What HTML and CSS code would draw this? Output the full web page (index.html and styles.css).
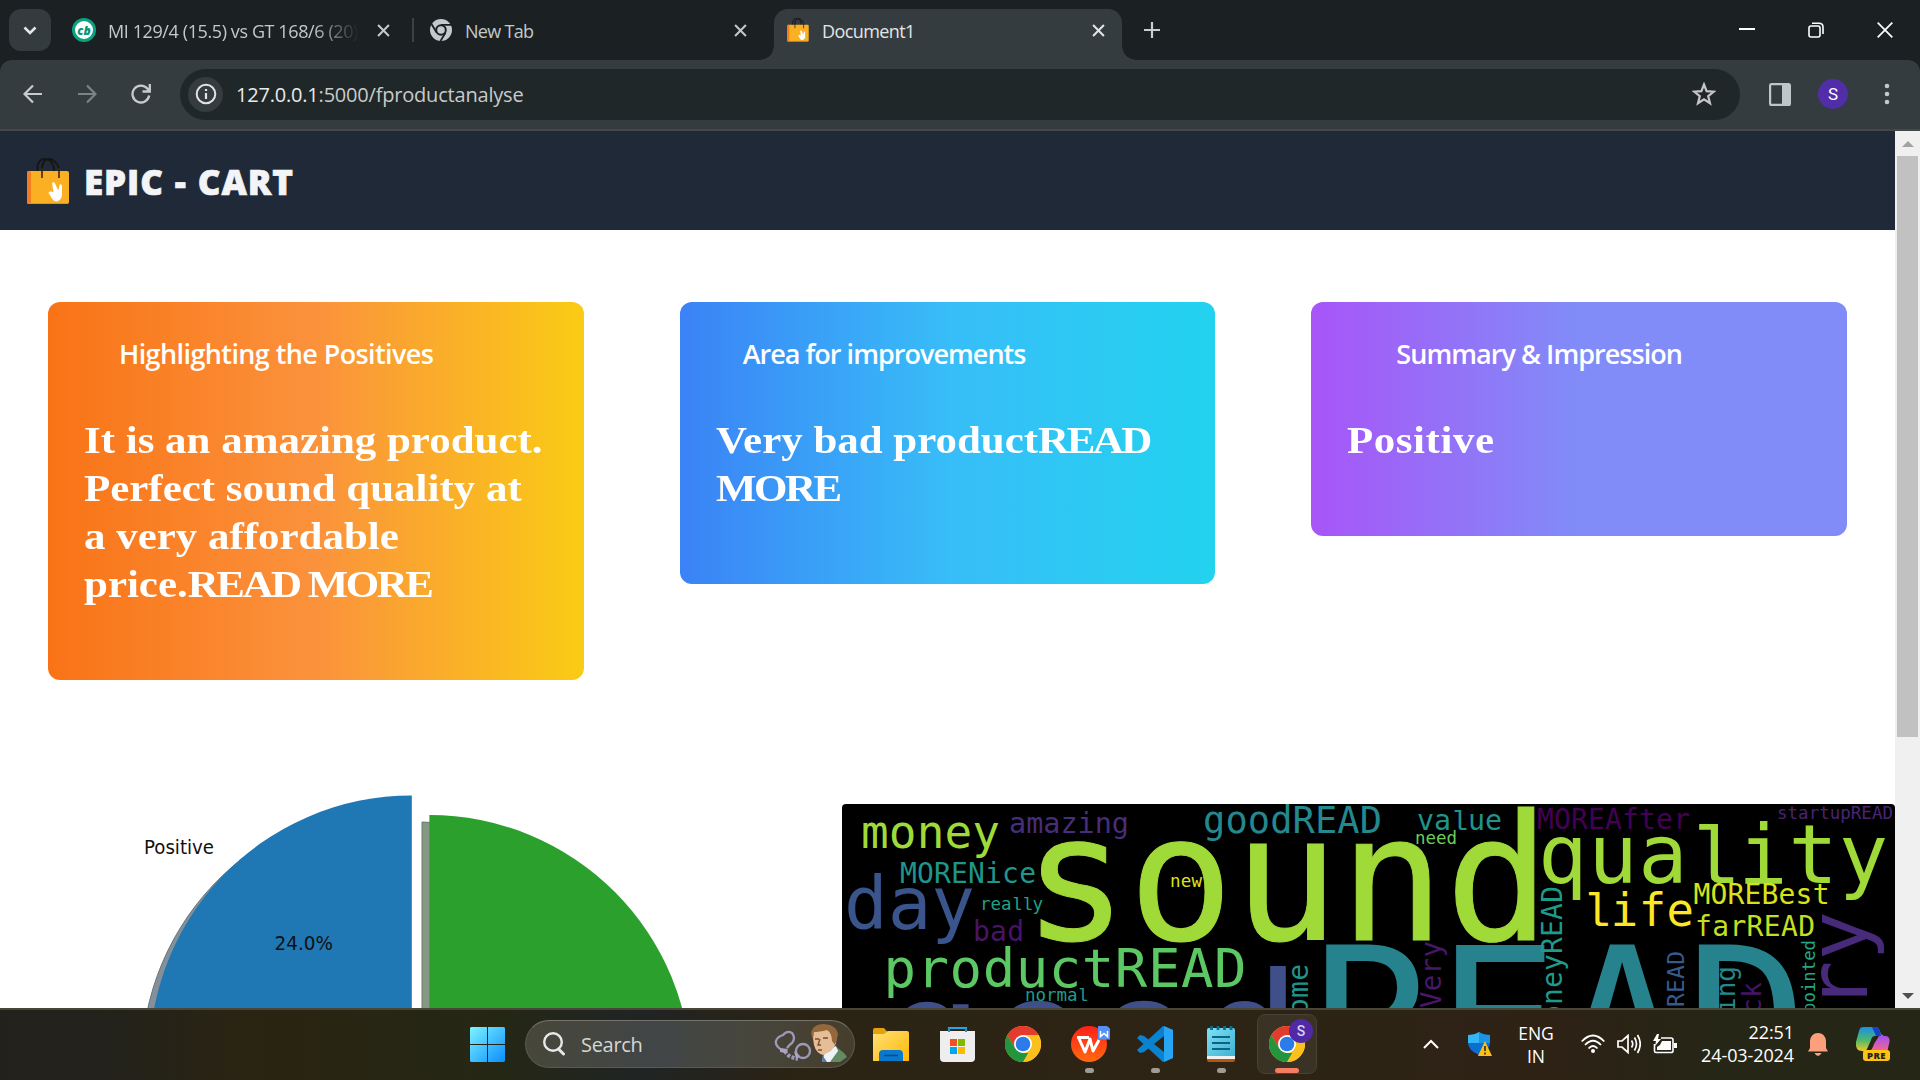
FILE: index.html
```html
<!DOCTYPE html>
<html lang="en">
<head>
<meta charset="utf-8">
<title>Document1</title>
<link rel="stylesheet" href="styles.css">
</head>
<body>
<svg width="0" height="0" class="defs">
  <defs>
    <linearGradient id="win" x1="0" y1="0" x2="1" y2="1"><stop offset="0" stop-color="#7df4ff"/><stop offset="1" stop-color="#0a8dff"/></linearGradient>
    <linearGradient id="fold" x1="0" y1="0" x2="1" y2="1"><stop offset="0" stop-color="#ffe07a"/><stop offset="1" stop-color="#ffb900"/></linearGradient>
    <linearGradient id="wps" x1="0" y1="0" x2="0" y2="1"><stop offset="0" stop-color="#ff1f1a"/><stop offset="1" stop-color="#ff6a10"/></linearGradient>
    <linearGradient id="note" x1="0" y1="0" x2="1" y2="1"><stop offset="0" stop-color="#7fe0f5"/><stop offset="1" stop-color="#3fb2d2"/></linearGradient>
    <linearGradient id="copA" x1="0" y1="0" x2="0" y2="1"><stop offset="0" stop-color="#1a8fe8"/><stop offset=".55" stop-color="#4fb96a"/><stop offset="1" stop-color="#f5c828"/></linearGradient>
    <linearGradient id="copB" x1="0" y1="0" x2="0" y2="1"><stop offset="0" stop-color="#a650f0"/><stop offset="1" stop-color="#ff6a80"/></linearGradient>
    <symbol id="bag" viewBox="0 0 42 47">
      <path d="M10.500 21V10Q11 1 18 1T27 10V15M15 21V10Q16 1 22 1T32 10V21" fill="none" stroke="#151515" stroke-width="1.800"/>
      <rect x="0" y="13" width="42" height="33" rx="2" fill="#fbb024"/>
      <rect x="0" y="13" width="4" height="33" rx="2" fill="#f47c20"/>
      <path d="M1 45.500H41" stroke="#e8901c"/>
      <path d="M15 10V20M32 10V20" stroke="#3a2a10" stroke-width="1.600"/>
      <path d="M25 25q2-1.500 3 .5l3 6.500q1-.5 1.500-5 1.500-1.500 2.500.5v10q-1 5-5.500 6-3-.5-4.500-3l-3.500-5.500q0-2 3-1.500l2 1z" fill="#fff"/>
    </symbol>
    <symbol id="chrome" viewBox="0 0 36 36">
      <circle cx="18" cy="18" r="18" fill="#fcc01c"/>
      <path d="M18 0A18 18 0 0 1 33.600 9H18L10.200 22.500 2.400 9A18 18 0 0 1 18 0Z" fill="#e33b2e"/>
      <path d="M2.400 9 10.200 22.500 18 27H25.800L18 36A18 18 0 0 1 2.400 9Z" fill="#24953f"/>
      <path d="M33.600 9A18 18 0 0 1 18 36L25.800 22.500 18 9Z" fill="#fcc01c"/>
      <circle cx="18" cy="18" r="9" fill="#fff"/><circle cx="18" cy="18" r="7.300" fill="#2b7be9"/>
    </symbol>
    <symbol id="x" viewBox="0 0 12 12"><path d="M1 1 11 11M11 1 1 11" fill="none" stroke="currentColor" stroke-width="1.900"/></symbol>
  </defs>
</svg>

<div class="screen">
  <header class="tabstrip">
    <button class="tabsearch"><svg width="14" height="9" viewBox="0 0 14 9"><path d="M1.500 1.500 7 7 12.500 1.500" fill="none" stroke="#e3e7e7" stroke-width="2.600"/></svg></button>
    <div class="tab tab-cricket">
      <span class="cb">cb</span>
      <span class="label fade">MI 129/4 (15.5) vs GT 168/6 (20)</span>
      <svg class="close"><use href="#x"/></svg>
    </div>
    <i class="sep"></i>
    <div class="tab tab-new">
      <svg width="22" height="22" viewBox="0 0 22 22"><circle cx="11" cy="11" r="11" fill="#c3c9cc"/><circle cx="11" cy="11" r="4.800" fill="#c3c9cc" stroke="#1b2123" stroke-width="2"/><path d="M11 5.800H21M6.600 13.500 1.500 5M15.500 13.700 10.500 22" stroke="#1b2123" stroke-width="1.800"/></svg>
      <span class="label">New Tab</span>
      <svg class="close"><use href="#x"/></svg>
    </div>
    <div class="tab tab-active">
      <svg width="22" height="24"><use href="#bag"/></svg>
      <span class="label">Document1</span>
      <svg class="close"><use href="#x"/></svg>
    </div>
    <svg class="plus" width="16" height="16" viewBox="0 0 16 16"><path d="M8 0V16M0 8H16" stroke="#c8cdce" stroke-width="2.200"/></svg>
    <div class="winctl">
      <svg width="16" height="16" viewBox="0 0 16 16"><path d="M0 7H16" stroke="#fff" stroke-width="2"/></svg>
      <svg width="16" height="16" viewBox="0 0 16 16" fill="none" stroke="#fff" stroke-width="1.600"><rect x="1" y="4" width="11" height="11" rx="2"/><path d="M4 1.200H11Q15 1.200 15 5V12"/></svg>
      <svg width="16" height="16" viewBox="0 0 16 16"><path d="M.7.700 15.300 15.300M15.300.700.700 15.300" stroke="#fff" stroke-width="1.700"/></svg>
    </div>
  </header>

  <nav class="toolbar">
    <svg width="20" height="20" viewBox="0 0 20 20" fill="none" stroke="#c6cccd" stroke-width="2.200"><path d="M19 10H2M10 1.500 1.500 10 10 18.500"/></svg>
    <svg width="20" height="20" viewBox="0 0 20 20" fill="none" stroke="#7c8385" stroke-width="2.200"><path d="M1 10H18M10 1.500 18.500 10 10 18.500"/></svg>
    <svg width="20" height="20" viewBox="0 0 20 20" fill="none" stroke="#c6cccd" stroke-width="2.300"><path d="M18.200 11.500A8.400 8.400 0 1 1 16.500 4.800L18.500 7M18.800 0V7.500H11.500"/></svg>
    <div class="omnibox">
      <span class="info"><svg width="22" height="22" viewBox="0 0 22 22"><circle cx="11" cy="11" r="9.300" fill="none" stroke="#e3e3e3" stroke-width="2"/><path d="M11 10V16M11 6V8" stroke="#e3e3e3" stroke-width="2.200"/></svg></span>
      <span class="url"><b>127.0.0.1</b>:5000/fproductanalyse</span>
      <svg width="24" height="24" viewBox="0 0 24 24"><path d="M12 2.500 14.600 9.200 21.800 9.700 16.200 14.200 18 21.200 12 17.300 6 21.200 7.800 14.200 2.200 9.700 9.400 9.200Z" fill="none" stroke="#c6c6c6" stroke-width="2.200"/></svg>
    </div>
    <svg class="panel" width="22" height="23" viewBox="0 0 22 23"><rect x="1.100" y="1.100" width="19.800" height="20.800" rx="1.500" fill="none" stroke="#bec6c9" stroke-width="2.200"/><path d="M13 0H20V23H13Z" fill="#bec6c9"/></svg>
    <span class="avatar">S</span>
    <svg width="6" height="22" viewBox="0 0 6 22" fill="#c3cacc"><circle cx="3" cy="3" r="2.300"/><circle cx="3" cy="11" r="2.300"/><circle cx="3" cy="19" r="2.300"/></svg>
  </nav>

  <div class="viewport">
    <main class="page">
      <div class="brandbar">
        <svg width="42" height="47"><use href="#bag"/></svg>
        <h1>EPIC - CART</h1>
      </div>
      <section class="cards">
        <article class="card positives">
          <h2>Highlighting the Positives</h2>
          <p>It is an amazing product.<br>Perfect sound quality at<br>a very affordable<br>price.<span>READ MORE</span></p>
        </article>
        <article class="card improve">
          <h2>Area for improvements</h2>
          <p>Very bad product<span>READ<br>MORE</span></p>
        </article>
        <article class="card summary">
          <h2>Summary &amp; Impression</h2>
          <p>Positive</p>
        </article>
      </section>
      <section class="charts">
        <svg class="pie" width="842" height="218" viewBox="0 790 842 218">
          <path d="M403.800 1064V803A262 262 0 0 0 142 1080Z" fill="#84919a" stroke="#66757f"/>
          <path d="M422 1084V822A262 262 0 0 1 684 1084Z" fill="#869786" stroke="#6b7f6b"/>
          <path d="M411.800 1057V795.500A262 262 0 0 0 150 1073Z" fill="#1f77b4"/>
          <path d="M429.400 1077V815A262 262 0 0 1 691.400 1077Z" fill="#2ca02c"/>
          <g font-family="DejaVu Sans" font-size="19" fill="#111">
            <text x="144" y="853.500" textLength="70" lengthAdjust="spacingAndGlyphs">Positive</text>
            <text x="274.500" y="949.500" textLength="58.500" lengthAdjust="spacingAndGlyphs">24.0%</text>
          </g>
        </svg>
        <svg class="cloud" width="1053" height="204" viewBox="842 804 1053 204">
          <rect x="842" y="804" width="1053" height="204" fill="#000"/>
          <g class="words">
            <text x="861" y="847.500" font-size="46" textLength="139" fill="#a0da39">money</text>
            <text x="1009" y="833.300" font-size="28.500" textLength="120" fill="#472d7b">amazing</text>
            <text x="1203" y="832.700" font-size="37" textLength="179" fill="#23898e">goodREAD</text>
            <text x="1023" y="939.500" font-size="174" textLength="527" fill="#a0da39" stroke="#a0da39" stroke-width="1">sound</text>
            <text x="900" y="883" font-size="28" textLength="136" fill="#1f958b">MORENice</text>
            <text x="844" y="928.500" font-size="72.500" textLength="131" fill="#3a548c">day</text>
            <text x="980" y="909.800" font-size="17.500" textLength="63" fill="#1fa187">rea<tspan class="l">ll</tspan>y</text>
            <text x="973" y="940.600" font-size="28" textLength="51" fill="#481467">bad</text>
            <text x="1170" y="887" font-size="17.500" textLength="32" fill="#dde318">new</text>
            <text x="883.500" y="986.700" font-size="54" textLength="363" fill="#5cc863">productREAD</text>
            <text x="1025" y="1000.500" font-size="17.500" textLength="63" fill="#1e9c89">norma<tspan class="l">l</tspan></text>
            <text x="880" y="1099" font-size="174" textLength="422" fill="#3e4f8a">good</text>
            <text x="1312" y="1093" font-size="204" textLength="496" fill="#26838e">READ</text>
            <text x="1417" y="830" font-size="28.300" textLength="85" fill="#20938c">va<tspan class="l">l</tspan>ue</text>
            <text x="1415" y="843.800" font-size="17.500" textLength="42" fill="#6ccd5a">need</text>
            <text x="1537" y="829" font-size="28" textLength="153" fill="#440154">MOREAfter</text>
            <text x="1538" y="882.700" font-size="82" textLength="350" fill="#a0da39">qua<tspan class="l">l</tspan>ity</text>
            <text x="1777" y="818.700" font-size="17.500" textLength="116" fill="#482475">startupREAD</text>
            <text x="1583" y="926" font-size="45.500" textLength="111" fill="#fde725"><tspan class="l">l</tspan>ife</text>
            <text x="1693.500" y="904.300" font-size="28" textLength="136" fill="#d8e219">MOREBest</text>
            <text x="1695" y="935.700" font-size="28" textLength="120" fill="#c2df23">farREAD</text>
            <text transform="translate(1308 1015)rotate(-90)" font-size="28" textLength="51" fill="#20938c">ome</text>
            <text transform="translate(1562 1039)rotate(-90)" font-size="28" textLength="153" fill="#1f9a8a">moneyREAD</text>
            <text transform="translate(1441 1008)rotate(-90)" font-size="27.500" textLength="67" fill="#481769">Very</text>
            <text transform="translate(1684 1007)rotate(-90)" font-size="23" textLength="56" fill="#375a8c">READ</text>
            <text transform="translate(1734.800 1013)rotate(-90)" font-size="26" textLength="47" fill="#23898e">ing</text>
            <text transform="translate(1761 1014)rotate(-90)" font-size="26" textLength="32" fill="#481467">ck</text>
            <text transform="translate(1814.700 1013)rotate(-90)" font-size="17.300" textLength="73" fill="#22a884">pointed</text>
            <text transform="translate(1867.400 1010)rotate(-90)" font-size="82" textLength="99" fill="#472a7a">ry</text>
          </g>
        </svg>
      </section>
    </main>
    <aside class="scroll"><i class="up"></i><i class="thumb"></i><i class="down"></i></aside>
  </div>

  <footer class="taskbar">
    <div class="apps">
      <svg class="start" width="35" height="35" viewBox="0 0 35 35"><path d="M1 0H17V17H0V1ZM18 0H34L35 1V17H18ZM0 18H17V35H1L0 34ZM18 18H35V34L34 35H18Z" fill="url(#win)"/></svg>
      <div class="search">
        <svg width="24" height="24" viewBox="0 0 24 24" fill="none" stroke="#e8e8e8" stroke-width="2.400"><circle cx="11" cy="10" r="8.800"/><path d="M16.500 17 21.500 22" stroke-width="3" stroke-linecap="round"/></svg>
        <span>Search</span>
        <svg class="art" width="74" height="40" viewBox="0 0 74 40">
          <g fill="none" stroke="#9c9ab8" stroke-width="2.300"><path d="M8 26Q1 22 2 17 3 13 9 11 13 6 18 9 22 14 18 19 15 21 13 24"/><path d="M11 27Q13 31 17 33L24 35" stroke-dasharray="3 1.500" stroke-width="4"/><circle cx="29" cy="27" r="7"/></g>
          <path d="M6 24 14 25 12 29 6 28ZM20 27 26 32 22 35Z" fill="#a8a6c6"/>
          <path d="M48 38 49 29 60 21 70 29 73 33 66 38Z" fill="#648c62"/><path d="M48 38 51 28 62 22 64 27 56 38Z" fill="#eef3f8"/><path d="M49 32 53 38H48Z" fill="#4f7cc0"/>
          <path d="M38 8Q45 2 56 5 64 9 62 20L57 27 49 31Q42 29 40 21Z" fill="#e5bd96"/>
          <path d="M37 10Q38 0 50 0 63 1 64 11L61 21 58 17Q58 9 53 6 45 8 40 8L39 15Z" fill="#94683c"/>
          <path d="M41 15H45M49 14H54M46 15 44 21H47M44 26H48" stroke="#7b4a30" stroke-width="1.300" fill="none"/>
        </svg>
      </div>
      <div class="app"><svg width="36" height="33" viewBox="0 0 36 33"><path d="M0 10V2Q0 0 2 0H11Q14 4 16 4V10Z" fill="#e2a30a"/><path d="M0 6H11L15 3H34Q36 3 36 5V33H0Z" fill="url(#fold)"/><path d="M6 33V26Q6 22 10 22H26Q30 22 30 26V33Z" fill="#0a78cc"/><path d="M11 27.500H25" stroke="#064a8a" stroke-width="1.500"/></svg></div>
      <div class="app"><svg width="35" height="35" viewBox="0 0 35 35"><path d="M9 7V1H26V7" fill="none" stroke="#26a8e8" stroke-width="2.200"/><path d="M0 4H35V31Q35 35 31 35H4Q0 35 0 31Z" fill="#eee"/><path d="M9 5V1M26 5V1" stroke="#1b93d4" stroke-width="2"/><path d="M10 12H17V19H10Z" fill="#f25022"/><path d="M18 12H25V19H18Z" fill="#7fba00"/><path d="M10 20H17V27H10Z" fill="#00a4ef"/><path d="M18 20H25V27H18Z" fill="#ffb900"/></svg></div>
      <div class="app"><svg width="36" height="36"><use href="#chrome"/></svg></div>
      <div class="app run"><svg class="wps" width="42" height="38" viewBox="-3 -2 42 38"><circle cx="18" cy="18" r="18" fill="url(#wps)"/><path d="M6 11.500H18M8 12.500 14 26 19 13 22 25 28 14" fill="none" stroke="#fff" stroke-width="3" stroke-linejoin="round"/><path d="M27 0H36L39.500 3V13.500H27Z" fill="#5591f5"/><path d="M29.500 5V10.500L33 7.500 36.500 10.500V5" fill="none" stroke="#fff" stroke-width="1.500"/></svg></div>
      <div class="app run"><svg width="36" height="36" viewBox="0 0 36 36"><path d="M26 0 36 4V32L26 36 0 12 3 9 7 10 27 26V10L7 26 3 27 0 24Z" fill="#0b82cf"/><path d="M27 0 36 4V32L27 36Z" fill="#27a5f2"/></svg></div>
      <div class="app run"><svg width="28" height="36" viewBox="0 0 28 36"><path d="M0 30H28V34Q28 36 26 36H2Q0 36 0 34Z" fill="#b5560f"/><path d="M0 28H28V33H0Z" fill="#f0f0f0"/><path d="M0 4Q0 2 2 2H26Q28 2 28 4V30H0Z" fill="url(#note)"/><path d="M5 11H23M5 17H23M5 23H23" stroke="#0a6482" stroke-width="1.900"/><path d="M4.500 0V4M11 0V4M17.500 0V4M24 0V4" stroke="#0b6d8c" stroke-width="2.800"/></svg></div>
      <div class="app run current"><svg width="36" height="36"><use href="#chrome"/></svg><b>S</b></div>
    </div>
    <div class="tray">
      <svg class="caret" width="16" height="10" viewBox="0 0 16 10"><path d="M1 9 8 2 15 9" fill="none" stroke="#fff" stroke-width="2"/></svg>
      <svg class="shield" width="24" height="25" viewBox="0 0 24 25"><path d="M0 3Q7 3 11 0 15 3 22 3V11Q22 18 11 23 0 18 0 11Z" fill="#0a6fd0"/><path d="M0 3Q7 3 11 0V11H0Z" fill="#35b6f4"/><path d="M11 0Q15 3 22 3V11H11Z" fill="#1c93e6"/><path d="M17 9 24 24H10Z" fill="#fcbf1a"/><path d="M17 14V19M17 20.500V22.500" stroke="#222" stroke-width="1.500"/></svg>
      <div class="lang">ENG<br>IN</div>
      <svg class="wifi" width="24" height="20" viewBox="0 0 24 20" fill="none" stroke="#fff" stroke-width="1.800"><path d="M.7 7.500Q12-4.500 23.300 7.500M4 11Q12 2.500 20 11M7.500 14.500Q12 9.500 16.500 14.500"/><circle cx="12" cy="17" r="2" fill="#fff" stroke="none"/></svg>
      <svg class="vol" width="24" height="20" viewBox="0 0 24 20" fill="none" stroke="#fff" stroke-width="1.700"><path d="M1 7H5L11 1.500V18.500L5 13H1ZM14.500 6.500Q17 10 14.500 13.500M17.500 3.500Q21.500 10 17.500 16.500M20.500 1Q26 10 20.500 19"/></svg>
      <svg class="batt" width="24" height="20" viewBox="0 0 24 20"><path d="M8 4H18Q20 4 20 6V17Q20 18.500 18 18.500H3Q1.500 18.500 1.500 17V10" fill="none" stroke="#fff" stroke-width="1.600"/><path d="M9 7H18V16H4V13L7 11ZM21 9H24V14H21ZM4 0 0 7H3L2 12 8 5H5L6 0Z" fill="#fff"/></svg>
      <div class="clock">22:51<br>24-03-2024</div>
      <svg class="bell" width="20" height="23" viewBox="0 0 20 23"><path d="M2 15V8Q3 0 10 0T18 8V15L20 18.500H0ZM6.500 20H13.500Q12 23 10 23T6.500 20Z" fill="#fc9f7c"/></svg>
      <div class="copilot">
        <svg width="35" height="26" viewBox="0 0 35 26"><path d="M8 0H21Q24 0 26 7L29 9H20Q17 9 16 13L12 22Q11 25 7 24 0 24 1 15L4 4Q5 0 8 0Z" fill="url(#copA)"/><path d="M17 0H21Q25 1 26 9H21Z" fill="#1a3fc8"/><path d="M24 9H31Q36 10 34 17L32 26H12Q17 24 19 17Z" fill="url(#copB)"/></svg>
        <span>PRE</span>
      </div>
    </div>
  </footer>
</div>
</body>
</html>
```
FILE: styles.css
```css
* { box-sizing: border-box; margin: 0; padding: 0; }
body { width: 1920px; height: 1080px; overflow: hidden; background: #fff; font-family: "Open Sans", "Noto Sans", sans-serif; }
svg { display: block; flex: none; }
.defs { position: absolute; }
.screen { display: flex; flex-direction: column; width: 1920px; height: 1080px; }

/* browser tabs */
.tabstrip { position: relative; z-index: 1; display: flex; height: 60px; padding-left: 9px; background: #1b2123; color: #c3c8c9; align-items: center; }
.tabsearch { display: flex; align-items: center; justify-content: center; width: 42px; height: 42px; border: 0; border-radius: 12px; background: #343b3e; }
.tab { display: flex; align-items: center; font-size: 18px; }
.label { white-space: nowrap; letter-spacing: -0.7px; flex: 1; overflow: hidden; padding-top: 2px; }
.close { width: 13px; height: 13px; }
.tab-cricket { width: 340px; margin-left: 21px; }
.tab-cricket .label { flex: none; width: 251px; margin-left: 12px; margin-right: 18px; letter-spacing: -0.4px; }
.fade { -webkit-mask-image: linear-gradient(90deg, #000 82%, transparent); mask-image: linear-gradient(90deg, #000 82%, transparent); }
.cb { display: flex; align-items: center; justify-content: center; width: 24px; height: 24px; border: 3px solid #0aa37f; border-radius: 50%; background: #fff; color: #0a9475; font: italic 800 12px "Open Sans", sans-serif; }
.sep { width: 2px; height: 24px; background: #3b4244; }
.tab-new { width: 317px; margin-left: 16px; }
.tab-new .label { margin-left: 13px; }
.tab-active { position: relative; align-self: flex-end; width: 348px; height: 51px; margin-left: 27px; padding: 0 17px 9px 13px; border-radius: 14px 14px 0 0; background: #353c3f; color: #e3e5e5; }
.tab-active .label { margin-left: 13px; letter-spacing: -0.6px; }
.tab-active::before, .tab-active::after { content: ""; position: absolute; bottom: 0; width: 14px; height: 14px; }
.tab-active::before { left: -14px; background: radial-gradient(circle at 0 0, transparent 13.500px, #353c3f 14px); }
.tab-active::after { right: -14px; background: radial-gradient(circle at 100% 0, transparent 13.500px, #353c3f 14px); }
.plus { margin-left: 22px; }
.winctl { display: flex; gap: 53px; margin-left: auto; margin-right: 27px; }

/* address row */
.toolbar { position: relative; display: flex; align-items: center; gap: 34px; height: 71px; padding: 0 30px 1px 23px; border-bottom: 2px solid #474747; border-radius: 12px 12px 0 0; background: #353c3f; box-shadow: 0 -12px 0 #1b2123; }
.omnibox { display: flex; align-items: center; flex: 1; height: 51px; margin-left: -5px; margin-right: -5px; padding: 0 24px 0 8px; border-radius: 26px; background: #1f2729; }
.info { display: flex; align-items: center; justify-content: center; width: 35px; height: 35px; border-radius: 50%; background: #353c3f; }
.url { flex: 1; margin-left: 13px; color: #c9cbc9; font-size: 20px; letter-spacing: -0.2px; }
.url b { font-weight: 400; color: #e8eaea; }
.avatar { display: flex; align-items: center; justify-content: center; width: 30px; height: 30px; margin: 0 2px 0 -7px; border-radius: 50%; background: #512da8; color: #fff; font: 17px Roboto, sans-serif; }

/* page */
.viewport { display: flex; height: 877px; }
.page { width: 1895px; overflow: hidden; background: #fff; }
.brandbar { display: flex; align-items: center; gap: 15px; height: 99px; padding: 1px 0 0 27px; background: #202938; color: #f3f4f6; }
.brandbar h1 { font-size: 35px; font-weight: 800; letter-spacing: 0.9px; word-spacing: 1px; -webkit-text-stroke: 0.7px #f3f4f6; }
.cards { display: grid; grid-template-columns: repeat(3, 1fr); gap: 96px; align-items: start; height: 488px; padding: 72px 48px 0; }
.card { padding: 36px 36px 72px; border-radius: 12px; color: #fff; }
.card h2 { height: 78px; font-size: 27px; line-height: 32px; font-weight: 600; letter-spacing: -0.6px; white-space: nowrap; }
.card p { font: bold 38px/48px Georgia, "Liberation Serif", serif; white-space: nowrap; transform: scaleX(1.13); transform-origin: left; }
.card p span { letter-spacing: -2.2px; }
.positives { background: linear-gradient(90deg, #f97316, #fb923c, #facc15); }
.positives h2 { padding-left: 35px; }
.improve { background: linear-gradient(90deg, #3b82f6, #38bdf8, #22d3ee); }
.improve h2 { padding-left: 27px; letter-spacing: -0.97px; }
.summary { background: linear-gradient(90deg, #a855f7, #818cf8 50%); }
.summary h2 { padding-left: 49px; letter-spacing: -0.95px; }
.summary p { letter-spacing: 0.5px; }
.charts { display: flex; align-items: flex-end; height: 290px; }
.cloud { border-radius: 4px 4px 0 0; }
.words { font-family: "DejaVu Sans Mono", monospace; }
.l { font-family: "Liberation Mono", monospace; }
.scroll { display: flex; flex-direction: column; align-items: center; width: 25px; background: #f0f0f0; }
.up, .down { border: 6px solid transparent; }
.up { margin-top: 4px; border-bottom-color: #a3a3a3; }
.thumb { width: 21px; height: 581px; margin-top: 9px; background: #c1c1c1; }
.down { margin-top: auto; margin-bottom: 3px; border-top-color: #505050; }

/* taskbar */
.taskbar { display: flex; align-items: center; height: 72px; padding-bottom: 2px; border-top: 2px solid #494539; background: linear-gradient(90deg, #22211d 0, #23221b 110px, #2a2412 250px, #252715 500px, #202424 640px, #2b2314 800px, #2d2415 1250px, #2e2215 1550px, #252616 1720px, #252615 100%); color: #fff; }
.apps { display: flex; align-items: center; padding-left: 470px; }
.search { display: flex; align-items: center; width: 330px; height: 48px; margin: 0 6px 0 20px; padding: 0 6px 0 16px; border: 1px solid #5a5a50; border-top-color: #74746a; border-radius: 24px; background: linear-gradient(90deg, #47473a, #414547 40%, #47473e 65%, #463d2c); color: #d6d6d2; font-size: 20px; }
.search span { flex: 1; margin-left: 15px; letter-spacing: -0.3px; }
.app { position: relative; display: flex; align-items: center; justify-content: center; width: 60px; height: 60px; margin-right: 6px; border-radius: 8px; }
.run::after { content: ""; position: absolute; left: 26px; bottom: 1px; width: 9px; height: 5px; border-radius: 3px; background: #a09c94; }
.wps { margin-bottom: 2px; }
.current { border: 1px solid #494234; background: #3a3325; }
.current::after { left: 17px; bottom: 0; width: 24px; background: #f87c62; }
.current b { position: absolute; left: 31px; top: 4px; width: 24px; height: 24px; border-radius: 50%; background: #5129a5; color: #d8d0ee; font: 500 14px/24px Roboto, sans-serif; text-align: center; }
.tray { display: flex; align-items: center; margin-left: auto; padding-right: 30px; }
.shield { margin-left: 29px; }
.lang { width: 50px; margin-left: 19px; padding-top: 1px; text-align: center; font-size: 17.500px; line-height: 23px; letter-spacing: -0.1px; }
.wifi { margin-left: 20px; }
.vol, .batt { margin-left: 12px; }
.clock { width: 110px; margin-left: 7px; text-align: right; font-size: 18px; line-height: 23.500px; letter-spacing: -0.1px; white-space: nowrap; }
.bell { margin-left: 14px; }
.copilot { position: relative; width: 35px; height: 34px; margin-left: 27px; }
.copilot span { position: absolute; left: 8px; bottom: 0; width: 27px; height: 11px; border-radius: 3px; background: #fbc312; color: #222; font: 800 9.500px/11px "Open Sans", sans-serif; text-align: center; letter-spacing: 0.4px; }
```
